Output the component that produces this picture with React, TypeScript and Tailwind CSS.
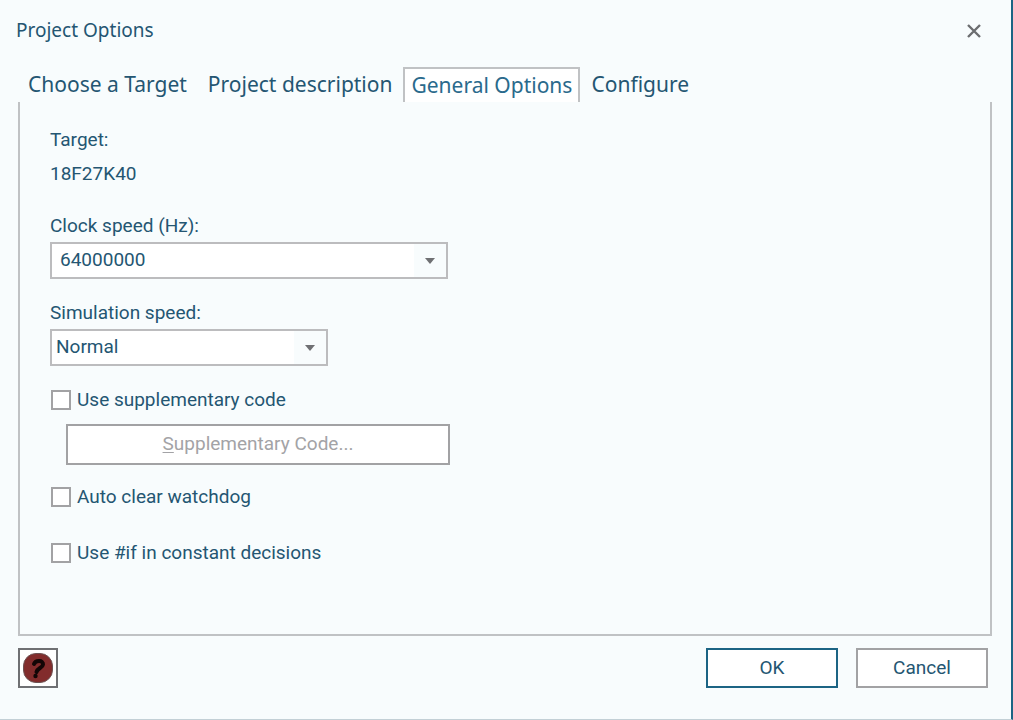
import { useState, type ReactNode } from "react";

const TABS = ["Choose a Target", "Project description", "General Options", "Configure"];

const CLOCK_SPEEDS = ["64000000", "32000000", "16000000", "8000000"];
const SIMULATION_SPEEDS = ["Normal", "Fast", "Slow"];

type SelectFieldProps = {
  id: string;
  label: string;
  options: string[];
  widthClass: string;
  textClass: string;
};

function SelectField({ id, label, options, widthClass, textClass }: SelectFieldProps) {
  return (
    <div className="flex flex-col items-start">
      <label htmlFor={id} className="leading-8">
        {label}
      </label>
      <div className={`grid h-[37px] max-w-full border-2 border-[#bcbcbe] bg-white ${widthClass}`}>
        <select
          id={id}
          className={`col-start-1 row-start-1 w-full appearance-none bg-transparent outline-none ${textClass}`}
        >
          {options.map((option) => (
            <option key={option}>{option}</option>
          ))}
        </select>
        <span className="pointer-events-none col-start-1 row-start-1 flex w-8 items-center justify-center justify-self-end bg-[#f8fcfd]">
          <svg width="10" height="6" viewBox="0 0 10 6" fill="#6f7073" aria-hidden="true">
            <path d="M0 0h10L5 6z" />
          </svg>
        </span>
      </div>
    </div>
  );
}

type CheckFieldProps = {
  checked: boolean;
  onChange: (checked: boolean) => void;
  children: ReactNode;
};

function CheckField({ checked, onChange, children }: CheckFieldProps) {
  return (
    <label className="flex items-center gap-1.5 self-start leading-8">
      <input
        type="checkbox"
        checked={checked}
        onChange={(event) => onChange(event.target.checked)}
        className="ml-px size-5 appearance-none border-2 border-[#a2a2a4] bg-white checked:bg-[#1c6484]"
      />
      {children}
    </label>
  );
}

export default function App() {
  const [activeTab, setActiveTab] = useState("General Options");
  const [useCode, setUseCode] = useState(false);
  const [clearWatchdog, setClearWatchdog] = useState(false);
  const [useIf, setUseIf] = useState(false);

  return (
    <main className="flex min-h-screen flex-col border-r-2 border-b border-r-[#1c6484] border-b-[#c3d0d6] bg-[#f8fcfd] pr-[19px] pb-[31px] pl-4 font-['Roboto',sans-serif] text-[19px] text-[#245672]">
      <header className="flex h-[61px] items-center justify-between pr-2">
        <h1 className="font-['Noto_Sans',sans-serif] text-[19px]">Project Options</h1>
        <button type="button" aria-label="Close" className="flex size-5 items-center justify-center">
          <svg width="14" height="14" viewBox="0 0 14 14" stroke="#6c6e70" strokeWidth="2.4" aria-hidden="true">
            <path d="M1 1l12 12M13 1L1 13" />
          </svg>
        </button>
      </header>

      <div
        role="tablist"
        className="mt-1.5 flex h-[35px] items-stretch gap-px pl-0.5 font-['Noto_Sans',sans-serif] text-[21px]"
      >
        {TABS.map((tab) => (
          <button
            key={tab}
            type="button"
            role="tab"
            aria-selected={tab === activeTab}
            onClick={() => setActiveTab(tab)}
            className={
              tab === activeTab
                ? "border-2 border-b-0 border-[#c0c2c4] bg-white px-1.5 text-[#2a6a8c]"
                : "px-2.5"
            }
          >
            {tab}
          </button>
        ))}
      </div>

      <section className="ml-0.5 flex flex-1 flex-col border-2 border-t-0 border-[#c0c2c4] px-7.5 pt-5 pb-12">
        <div className="leading-9">Target:</div>
        <div className="mb-5 leading-8">18F27K40</div>

        <SelectField
          id="clock-speed"
          label="Clock speed (Hz):"
          options={CLOCK_SPEEDS}
          widthClass="w-[398px]"
          textClass="pl-2"
        />
        <div className="mt-4.5">
          <SelectField
            id="simulation-speed"
            label="Simulation speed:"
            options={SIMULATION_SPEEDS}
            widthClass="w-[278px]"
            textClass="pl-1"
          />
        </div>

        <div className="mt-4.5 flex flex-col">
          <CheckField checked={useCode} onChange={setUseCode}>
            Use supplementary code
          </CheckField>
          <button
            type="button"
            disabled={!useCode}
            className="mt-2 ml-4 h-[41px] w-96 max-w-full border-2 border-[#a2a2a4] bg-white disabled:text-[#a3a3a6]"
          >
            <span className="underline underline-offset-2">S</span>upplementary Code...
          </button>
        </div>
        <div className="mt-4 flex flex-col gap-6">
          <CheckField checked={clearWatchdog} onChange={setClearWatchdog}>
            Auto clear watchdog
          </CheckField>
          <CheckField checked={useIf} onChange={setUseIf}>
            Use #if in constant decisions
          </CheckField>
        </div>
      </section>

      <footer className="mt-3 flex items-center gap-4.5 pr-1">
        <button
          type="button"
          aria-label="Help"
          className="mr-auto ml-0.5 flex size-10 items-center justify-center border-2 border-[#6f7073] bg-white"
        >
          <svg width="32" height="32" viewBox="0 0 32 32" fill="none" aria-hidden="true">
            <rect x="1.5" y="1.500" width="29" height="29" rx="12.500" fill="#822c2c" stroke="#6b5152" />
            <path
              d="M12 12c1.500-4 9.500-4 9 .5-.4 3.500-5.500 3.500-6.500 7.500"
              stroke="#120606"
              strokeWidth="4"
              strokeLinecap="round"
            />
            <circle cx="13.500" cy="24" r="2.200" fill="#120606" />
          </svg>
        </button>
        <button type="button" className="h-10 w-33 border-2 border-[#1c6484] bg-white">
          OK
        </button>
        <button type="button" className="h-10 w-33 border-2 border-[#a2a2a4] bg-white">
          Cancel
        </button>
      </footer>
    </main>
  );
}
